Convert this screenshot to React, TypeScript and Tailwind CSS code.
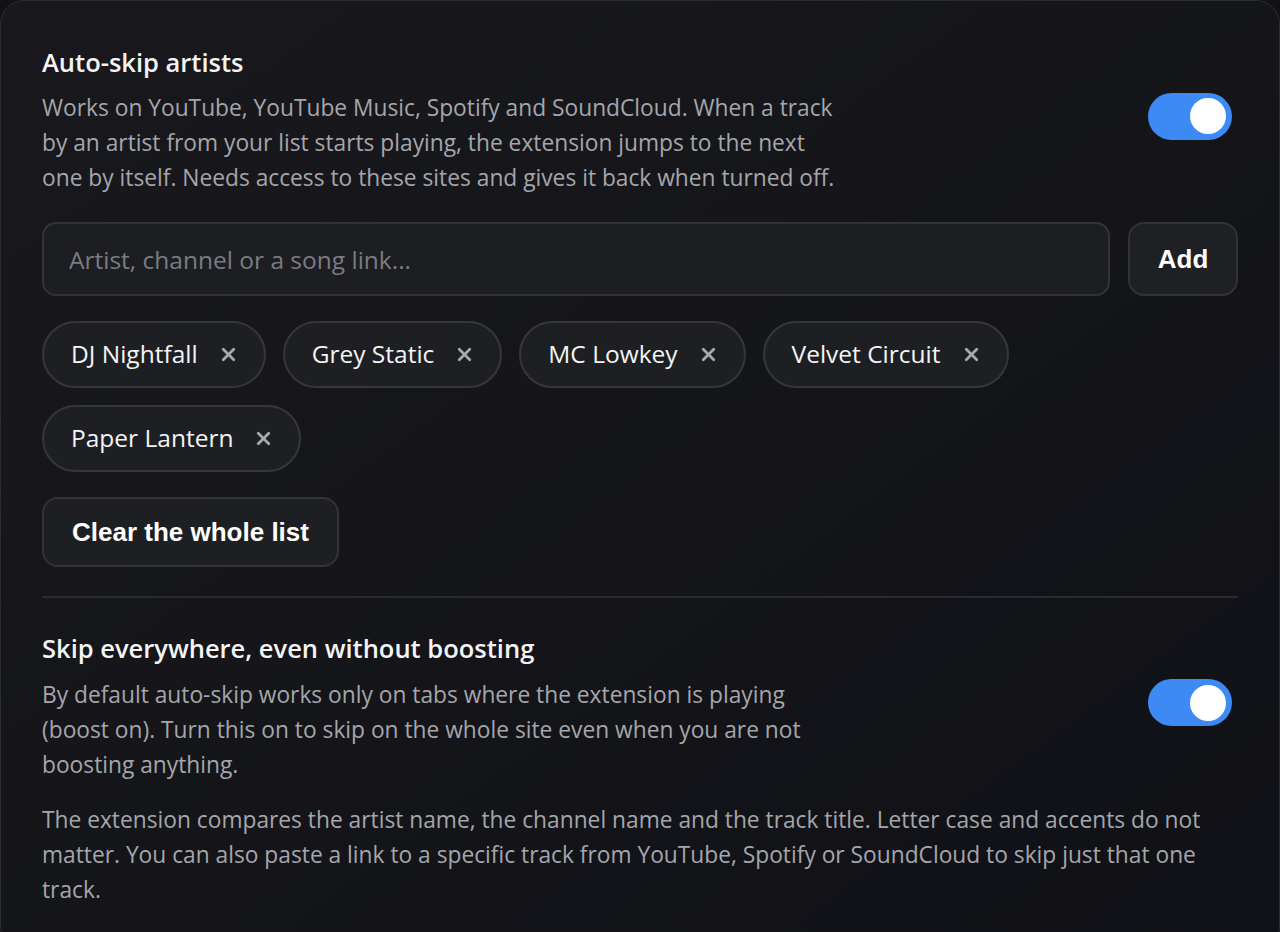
import { X } from "lucide-react";

const artists = ["DJ Nightfall", "Grey Static", "MC Lowkey", "Velvet Circuit", "Paper Lantern"];

const Toggle = () => (
  <button
    type="button"
    className="mr-[6px] mb-[5px] flex h-[47px] w-[84px] shrink-0 items-center justify-end rounded-full bg-[#3d8af5] px-[6px]"
  >
    <span className="h-[36px] w-[36px] rounded-full bg-white" />
  </button>
);

const App = () => {
  return (
    <div className="min-h-screen bg-[#121215] font-['Segoe_UI','Open_Sans',sans-serif]">
      <div className="rounded-[24px] border border-[#2c2d32] bg-gradient-to-br from-[#19191d] to-[#101116] px-[41px] pt-[41px] pb-[42px]">
        {/* Auto-skip */}
        <div className="flex items-center justify-between">
          <div className="max-w-[800px]">
            <h2 className="text-[25.5px] leading-[40px] font-semibold text-[#f4f4f5]">Auto-skip artists</h2>
            <p className="mt-[8px] text-[22.75px] leading-[35px] text-[#a5a6ab]">
              Works on YouTube, YouTube Music, Spotify and SoundCloud. When a track by an artist from your list
              starts playing, the extension jumps to the next one by itself. Needs access to these sites and gives it
              back when turned off.
            </p>
          </div>
          <Toggle />
        </div>

        <div className="mt-[27px] flex gap-[18px]">
          <input
            type="text"
            placeholder="Artist, channel or a song link..."
            className="h-[74px] flex-1 rounded-[14px] border-2 border-[#323338] bg-[#1d1e22] px-[25px] text-[24.5px] text-white placeholder:text-[#7a7c83] focus:outline-none"
          />
          <button
            type="button"
            className="h-[74px] w-[110px] rounded-[16px] border-2 border-[#323338] bg-[#1f2024] font-['Liberation_Sans',Arial,sans-serif] text-[26px] font-bold text-white"
          >
            Add
          </button>
        </div>

        <div className="mt-[25px] flex flex-wrap gap-[17px]">
          {artists.map((name) => (
            <span
              key={name}
              className="flex h-[67px] items-center gap-[20px] rounded-full border-2 border-[#36373c] bg-[#1e1f23] pr-[25px] pl-[27px] text-[24.5px] text-[#f4f4f5]"
            >
              {name}
              <X size={21} strokeWidth={3.2} className="text-[#a8a9ad]" />
            </span>
          ))}
        </div>

        <button
          type="button"
          className="mt-[25px] h-[70px] rounded-[16px] border-2 border-[#323338] bg-[#1e1f23] px-[28px] font-['Liberation_Sans',Arial,sans-serif] text-[26px] font-bold text-white"
        >
          Clear the whole list
        </button>

        <div className="mt-[29px] h-[2px] bg-[#2a2b30]" />

        {/* Skip everywhere */}
        <div className="mt-[30px] flex items-center justify-between">
          <div className="max-w-[800px]">
            <h2 className="text-[25.5px] leading-[40px] font-semibold text-[#f4f4f5]">
              Skip everywhere, even without boosting
            </h2>
            <p className="mt-[9px] text-[22.75px] leading-[35px] text-[#a5a6ab]">
              By default auto-skip works only on tabs where the extension is playing (boost on). Turn this on to skip
              on the whole site even when you are not boosting anything.
            </p>
          </div>
          <Toggle />
        </div>

        <p className="mt-[20px] text-[22.75px] leading-[35px] text-[#a5a6ab]">
          The extension compares the artist name, the channel name and the track title. Letter case and accents do
          not matter. You can also paste a link to a specific track from YouTube, Spotify or SoundCloud to skip just
          that one track.
        </p>
      </div>
    </div>
  );
};

export default App;
